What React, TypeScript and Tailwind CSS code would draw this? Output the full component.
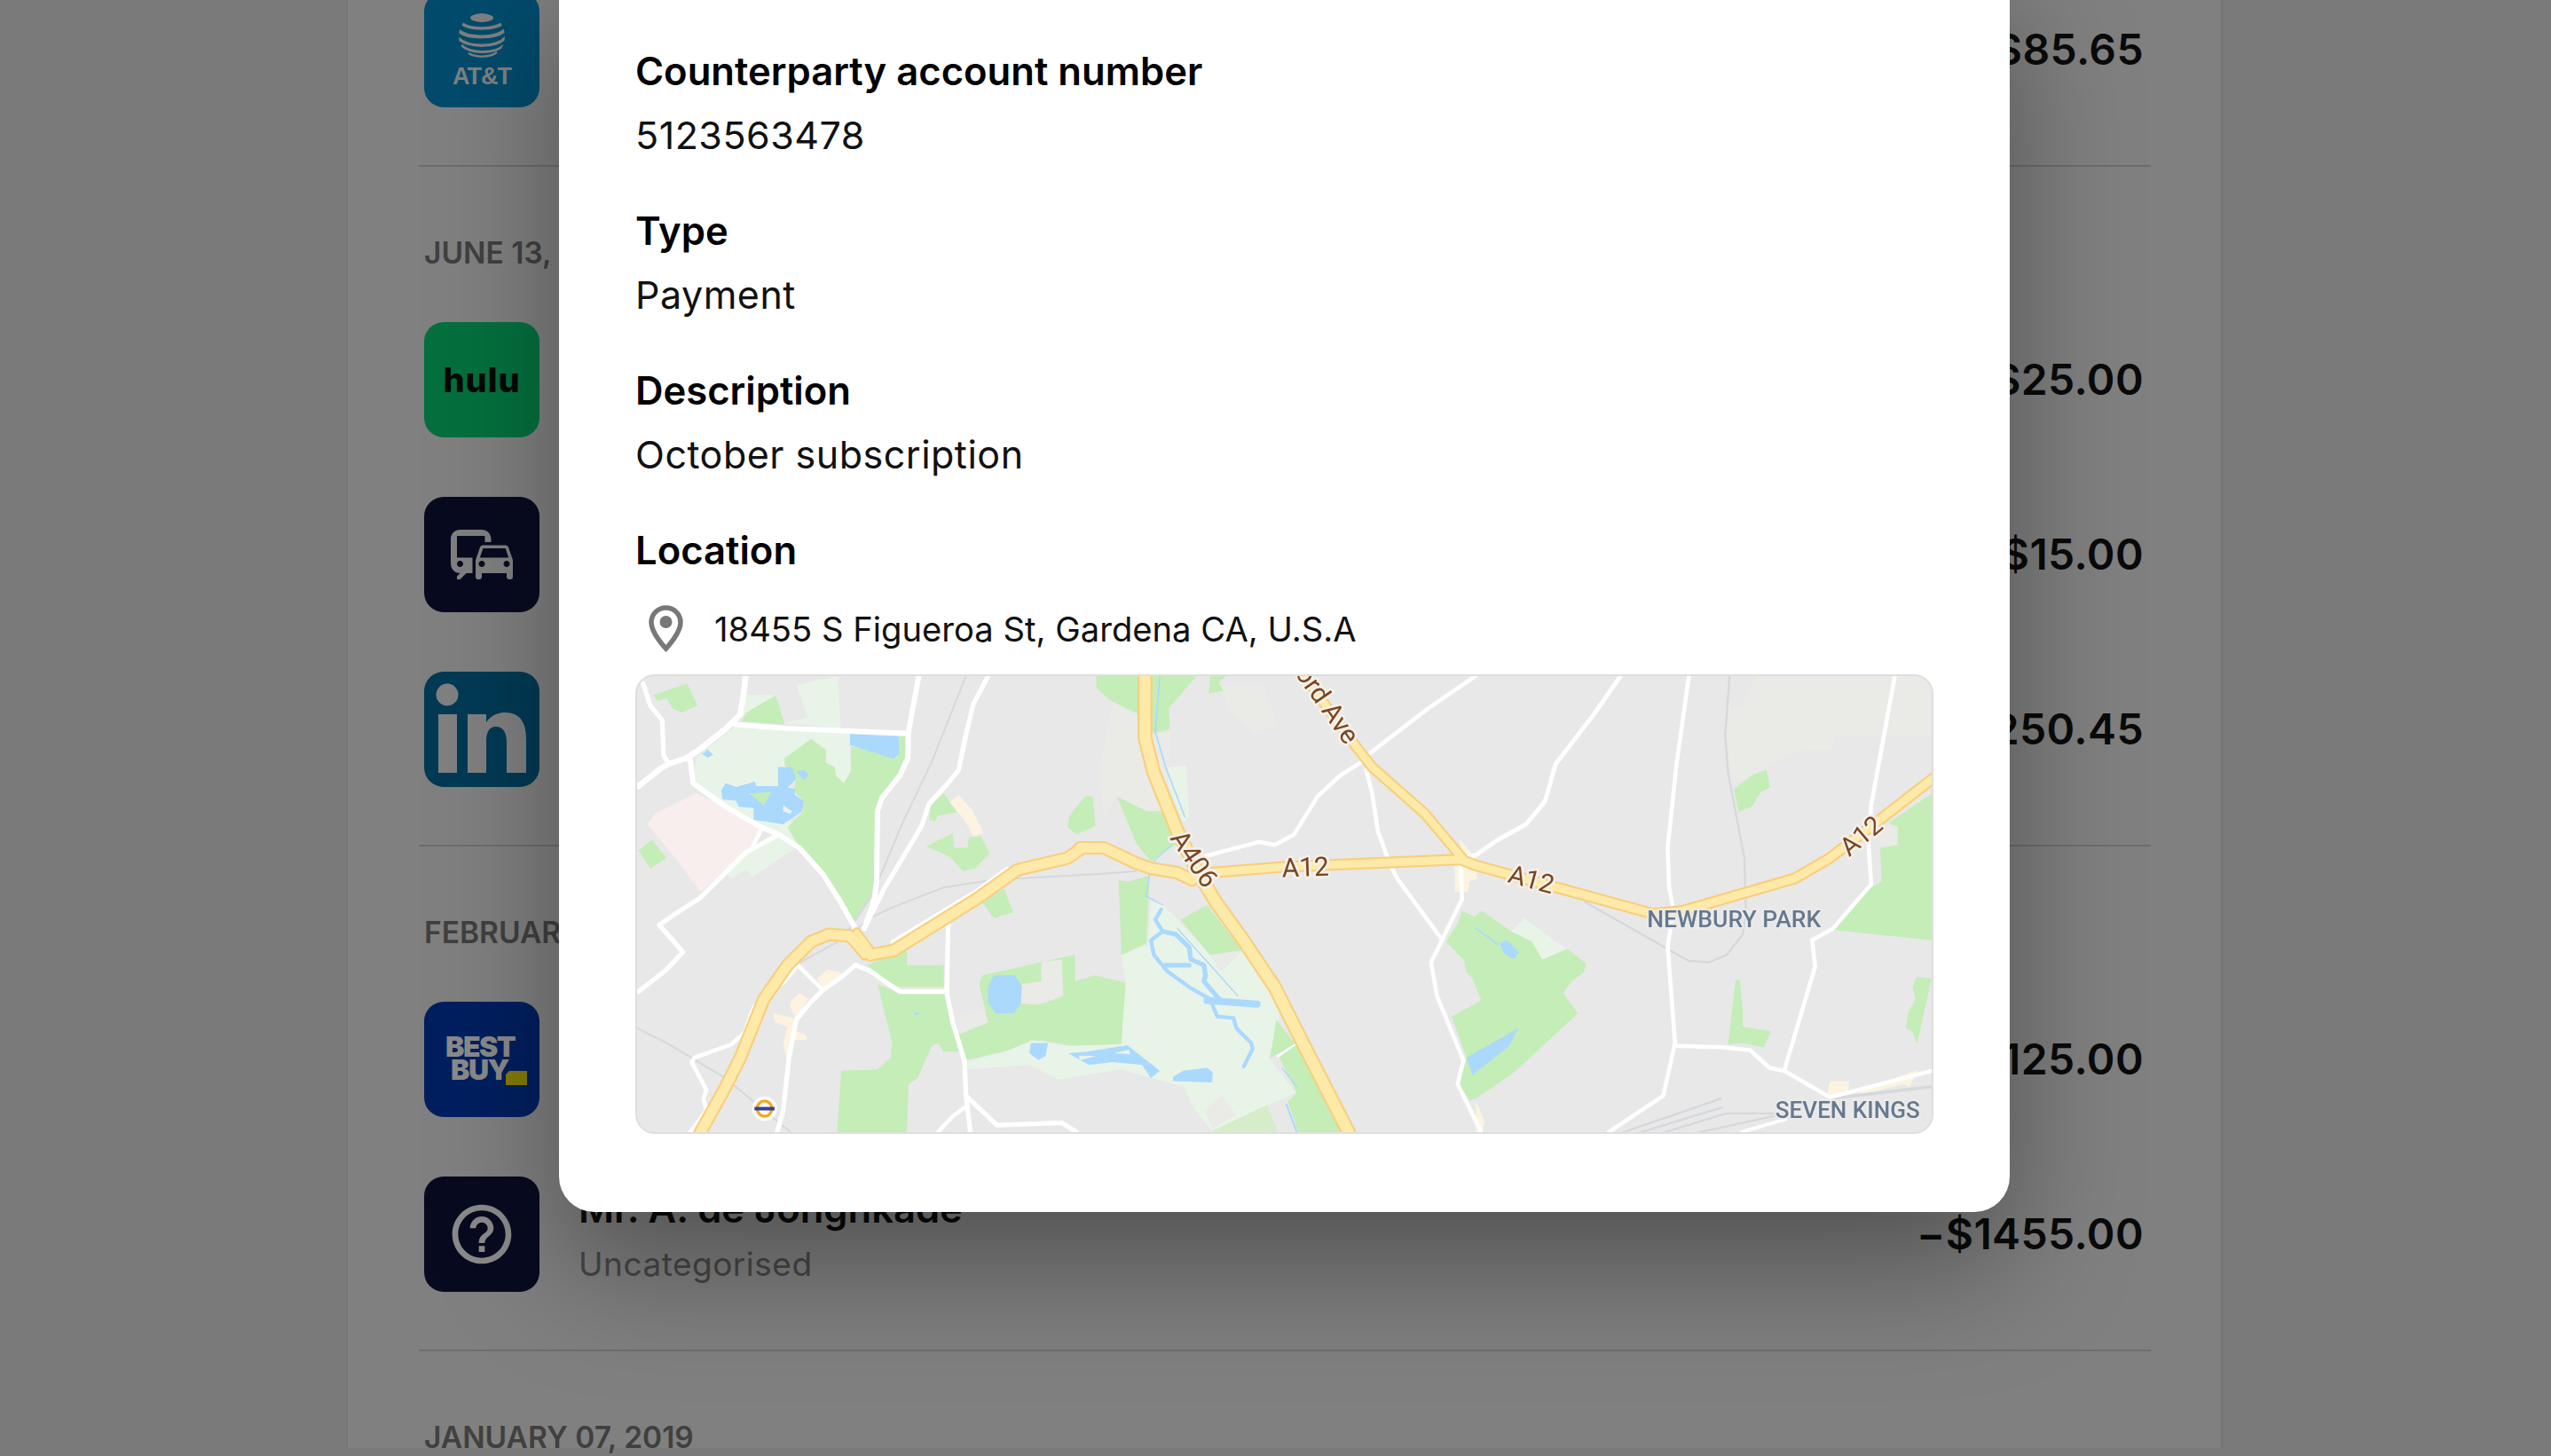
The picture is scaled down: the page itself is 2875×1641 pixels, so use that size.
import React from "react";
import { MdCommute, MdHelpOutline } from "react-icons/md";

const OFF = [0, 1452, 2844];
const pts = (zone: number, s: string) =>
  s.trim().split(/\s+/).map((p) => {
    const [x, y] = p.split(",").map(Number);
    return `${x + OFF[zone]},${y}`;
  });
const line = (...segs: [number, string][]) => "M" + segs.flatMap(([z, s]) => pts(z, s)).join("L");
const area = (...segs: [number, string][]) => line(...segs) + "Z";

const GREEN = "#c4edb8";
const LIGHT = "#e9f4e8";
const BLUE = "#aad9fd";
const BEIGE = "#eaeae7";
const CREAM = "#fcf4e0";
const PINK = "#f9eeee";

const areas: [string, string][] = [
  [BEIGE, area([1, "160,90 230,125 300,195 360,190 350,310 330,470 280,460 175,410 130,470 115,320"])],
  [BEIGE, area([1, "530,30 670,30 720,170 640,195 550,110"])],
  [BEIGE, area([2, "950,0 1545,0 1545,200 1220,200 1210,250 1110,250 870,370 850,250 850,100 900,100"])],
  [LIGHT, area([0, "200,280 335,170 720,195 725,330 700,365 670,335 640,295 640,250 590,215 500,280 500,330 520,500 545,545 530,590 390,685 370,660 320,690 300,670 370,600 480,540 300,445 190,365"])],
  [LIGHT, area([0, "540,30 680,0 690,180 500,160 580,140"])],
  [LIGHT, area([0, "370,65 470,65 400,120 360,130"])],
  [PINK, area([0, "35,505 60,470 200,400 300,445 420,515 385,590 215,735 130,620"])],
  [GREEN, area([0, "55,65 170,25 205,100 150,125 120,110 100,75 70,85"])],
  [GREEN, area([0, "355,155 370,125 470,65 500,165"])],
  [GREEN, area([0, "500,280 590,215 640,250 640,295 670,310 675,340 700,365 725,325 725,240 800,255 880,280 890,205 910,205 915,285 835,410 815,450 810,690 790,760 730,850 680,750 630,670 550,585 510,515 565,460 560,420 530,390 540,350 500,300"])],
  [GREEN, area([0, "5,595 50,557 100,620 45,655"])],
  [GREEN, area([0, "990,490 995,440 1040,400 1085,465 1020,475 1010,495"])],
  [CREAM, area([0, "1060,430 1090,405 1135,455 1175,535 1140,545 1110,490"])],
  [GREEN, area([0, "980,580 1070,535 1075,585 1120,585 1125,550 1165,545 1195,605 1145,655 1105,665 1060,615"])],
  [GREEN, area([0, "1170,770 1245,725 1275,805 1210,825"])],
  [GREEN, area([0, "1460,515 1465,475 1520,410 1545,410 1554,510 1490,540"])],
  [GREEN, area([0, "815,1050 890,1080 1045,1080 1070,1180 1090,1280 1040,1280 1020,1250 1000,1260 950,1370 920,1390 915,1554 678,1554 692,1345 815,1340 860,1300 865,1250"])],
  [GREEN, area([0, "915,935 915,985 1040,985 1040,1060 890,1060 840,1035 780,985 870,950"])],
  [GREEN, area([0, "1090,1220 1190,1180 1160,1050 1170,1020 1370,975 1435,960 1485,950 1485,1040"], [1, "100,1020 205,1045 190,1255 100,1275"], [0, "1370,1240 1260,1275 1110,1310"])],
  [LIGHT, area([1, "190,950 280,915 290,770 330,780 380,830 490,950 520,1000 600,940 640,985 710,1060 725,1170 690,1300 780,1420 690,1460 500,1554 440,1480 400,1400 190,1340 0,1370"], [0, "1430,1375 1330,1325 1120,1340 1120,1315 1260,1275 1340,1240 1452,1260"], [1, "190,1255 205,1045"])],
  [BEIGE, area([0, "1300,1050 1370,1040 1370,975 1440,965 1445,1090 1405,1105 1360,1120 1300,1115"])],
  [BEIGE, area([0, "1090,1160 1170,1130 1190,1180 1095,1220"])],
  [BLUE, area([0, "1210,1020 1280,1020 1305,1055 1300,1120 1275,1150 1215,1150 1190,1110 1190,1060"])],
  [BLUE, area([0, "938,1145 960,1148 945,1158"])],
  [BLUE, area([0, "1335,1250 1393,1250 1385,1295 1360,1308 1330,1285"])],
  [BLUE, area([0, "722,197 888,205 888,265 870,282 722,235"])],
  [BLUE, area([0, "285,390 300,365 335,378 400,360 405,375 478,375 478,310 525,310 540,350 510,380 535,385 535,405 565,425 560,460 495,505 395,490 395,450 345,445 335,425 290,420"])],
  [GREEN, area([0, "380,400 455,395 430,440"])],
  [LIGHT, area([0, "495,440 525,460 520,470 495,460"])],
  [BLUE, area([0, "540,325 565,320 582,335 565,355"])],
  [BLUE, area([0, "220,265 240,250 258,268 240,278"])],
  [CREAM, area([0, "610,1030 645,1000 690,1010 700,1030 640,1070 620,1050"])],
  [CREAM, area([0, "520,1110 550,1080 580,1100 540,1170 520,1130"])],
  [CREAM, area([0, "460,1150 530,1165 540,1210 575,1225 575,1240 530,1240 510,1320 495,1250 510,1195 470,1180"])],
  [GREEN, area([1, "105,0 445,0 350,110 355,180 300,195 240,125 155,85 105,40"])],
  [GREEN, area([1, "490,0 545,0 520,20 535,50 485,60 490,25"])],
  [LIGHT, area([1, "350,310 410,305 420,480 400,500 350,370"])],
  [GREEN, area([1, "175,410 275,460 330,460 380,570 290,630 240,570"])],
  [GREEN, area([1, "180,695 215,700 285,680 275,910 190,950"])],
  [GREEN, area([1, "390,830 480,780 600,935 490,950"])],
  [BEIGE, area([1, "490,950 600,935 530,1005"])],
  [BEIGE, area([1, "470,1480 530,1430 580,1495 500,1540"])],
  [BLUE, area([1, "10,1285 75,1280 210,1258 320,1345 290,1370 260,1325 160,1315 80,1325"])],
  [LIGHT, area([1, "45,1293 105,1295 50,1308"])],
  [LIGHT, area([1, "165,1285 215,1273 220,1288"])],
  [BLUE, area([1, "365,1365 400,1345 480,1335 500,1350 497,1385 365,1380"])],
  [GREEN, area([1, "715,1170 780,1255 695,1300"])],
  [GREEN, area([1, "725,1300 780,1255 940,1554 790,1554 755,1450 785,1420"])],
  ["#d5edc9", area([1, "490,1554 685,1460 720,1554"])],
  [GREEN, area([2, "-100,905 -60,840 -47,800 -5,820 20,800 120,870 190,905 225,965 310,930 375,980 365,1010 325,1040 295,1080 345,1150 130,1350 0,1440 -22,1445 -60,1390 -32,1300 -82,1160 18,1105 -12,1030 -32,1010 -40,970"])],
  [LIGHT, area([2, "120,870 165,825 305,930 225,965 190,905"])],
  [BLUE, area([2, "80,910 105,900 145,940 130,965 95,945"])],
  [BLUE, area([2, "-32,1300 143,1200 113,1260 -12,1360"])],
  [GREEN, area([2, "875,385 940,335 985,320 997,380 965,395 935,445 890,462"])],
  [GREEN, area([2, "1370,580 1430,570 1420,510 1400,500 1545,400 1545,900 1210,865 1340,720 1375,700"])],
  [BEIGE, area([2, "1370,510 1430,510 1430,575 1370,585"])],
  [GREEN, area([2, "880,1035 895,1035 905,1145 905,1195 1000,1210 975,1265 905,1250 855,1255"])],
  [GREEN, area([2, "1495,1025 1545,1030 1495,1255 1480,1210 1458,1200 1465,1150 1490,1100 1480,1060"])],
  [CREAM, area([2, "1200,1380 1265,1380 1260,1425 1190,1430"])],
  [CREAM, area([2, "1370,1390 1500,1340 1470,1400 1450,1390 1250,1440"])],
  [CREAM, area([2, "0,1450 30,1520 20,1554 0,1554"])],
  [CREAM, area([1, "1335,555 1395,625 1395,690 1370,700 1365,735 1320,735 1320,650 1350,625"])],
];

const water: [string, number][] = [
  [line([1, "320,0 305,190 340,310 405,480"]), 5],
  [line([1, "360,575 300,630 285,680 275,750 330,780"]), 4],
  [line([1, "325,795 305,830 330,870 290,900 300,950 345,1005 420,1060 490,1100 515,1160 570,1165 580,1200 630,1250 635,1270 605,1330"]), 13],
  [line([1, "330,870 375,880 420,925 425,965 470,985 475,1020 470,1040 525,1105"]), 16],
  [line([1, "340,985 420,985"]), 16],
  [line([1, "480,1105 650,1118"]), 24],
  [line([1, "380,860 585,1090"]), 4],
  [line([1, "735,1335 785,1400"]), 4],
  [line([1, "750,1460 785,1554"]), 6],
  [line([2, "0,860 75,915"]), 5],
];

const rails: [string, number][] = [
  [line([2, "860,0 845,200 855,330 910,620 915,800 905,880 850,950 790,975 720,970 370,770"]), 7],
  [line([0, "1115,0 1000,290 900,500 800,740 780,770 720,860"]), 6],
  [line([0, "420,1130 555,975 690,900 800,820 860,790 1040,720 1200,695 1554,675"], [1, "240,665"]), 6],
  [line([0, "0,1200 100,1250 300,1370 520,1554"]), 6],
  [line([2, "500,1554 830,1440"]), 7],
  [line([2, "560,1554 835,1470"]), 7],
  [line([2, "640,1554 850,1490 1020,1490"]), 7],
  [line([2, "760,1554 1050,1490"]), 7],
  [line([2, "1200,1440 1540,1400"]), 11],
];

const roads: [string, number][] = [
  [line([0, "20,25 45,100 85,150 90,270 105,295"]), 16],
  [line([0, "5,375 80,315 105,300 165,280 205,255 300,180 350,130 360,70 368,0"]), 20],
  [line([0, "335,165 500,178 915,195"]), 18],
  [line([0, "955,0 920,190 918,280 890,340 830,415 815,460 812,700 805,760 770,860"]), 18],
  [line([0, "180,285 190,365 300,445 420,515 480,540 550,585 630,675 690,770 740,860"]), 18],
  [line([0, "480,540 370,600 300,670 215,755 130,810 75,848 155,940 100,1000 5,1075"]), 16],
  [line([0, "420,525 390,585"]), 14],
  [line([0, "1190,0 1140,95 1115,200 1090,320 1050,370 990,435 965,510 900,620 840,720 770,860"]), 16],
  [line([0, "740,985 700,1020 630,1070 590,1110 540,1170 515,1300 495,1480 475,1554"]), 16],
  [line([0, "545,985 630,1070"]), 14],
  [line([0, "545,985 500,1040 430,1095 395,1130 365,1215 320,1255 195,1300 185,1315 235,1410 225,1440 235,1480 180,1554"]), 14],
  [line([0, "740,985 790,1005 890,1075 1050,1075"]), 16],
  [line([0, "1055,830 1050,1080 1070,1180 1110,1310 1115,1430 1130,1554"]), 16],
  [line([0, "1115,1430 1220,1530 1440,1522 1490,1554"]), 16],
  [line([0, "1110,1470 1070,1500 1020,1554"]), 14],
  [line([0, "865,905 1145,735 1255,655"]), 12],
  [line([1, "470,615 655,565 710,575 775,540 855,410 930,340 1000,295"]), 14],
  [line([1, "1030,265 1230,110 1390,0"]), 14],
  [line([1, "1020,320 1040,400 1060,530 1100,640 1125,690 1275,895"]), 14],
  [line([1, "1340,650 1345,760 1240,975 1260,1090 1350,1310 1330,1390 1410,1554"]), 14],
  [line([1, "1360,615"], [2, "0,610 70,560 170,505 235,425 270,300 400,130 490,0"]), 15],
  [line([1, "720,1295 780,1255"]), 7],
  [line([2, "722,0 680,300 650,585 655,720 670,800 650,920 675,1250 635,1430 450,1554"]), 14],
  [line([2, "675,1260 840,1265 930,1275 995,1335 1045,1345 1200,1435 1545,1345"]), 14],
  [line([2, "1420,0 1340,440 1330,560 1340,710 1210,860 1140,900 1150,990 1045,1345"]), 14],
  [line([2, "900,1554 1050,1510"]), 12],
];

const highways: [string, number][] = [
  [line([1, "810,0 970,220 1040,310 1220,470 1345,620"]), 38],
  [line([0, "215,1554 300,1400 350,1300 430,1100 510,985 590,905 650,880 720,885 760,925 790,950 870,935 1150,760 1290,660 1460,620 1510,585"], [1, "50,585 130,585 235,635 290,655 380,670 430,695"]), 46],
  [line([0, "745,870 790,930 770,955 725,900 745,870"]), 28],
  [line([1, "270,0 270,210 300,330 380,530 450,670 510,770 600,895 710,1060 810,1260 960,1554"]), 50],
  [line([1, "490,670 740,650 1340,625"], [2, "0,645 600,810 700,800 1080,690 1200,620 1330,520 1554,345"]), 40],
];

const MapLabels = () => {
  const road = {
    fontFamily: "Roboto, sans-serif",
    fill: "#7a4520",
    stroke: "#f4f1ea",
    strokeWidth: 16,
    paintOrder: "stroke",
    strokeLinejoin: "round",
  } as React.SVGProps<SVGTextElement>;
  const place = {
    fontFamily: "Roboto, sans-serif",
    fontWeight: 500,
    fill: "#66788e",
    stroke: "#ebebeb",
    strokeWidth: 12,
    paintOrder: "stroke",
    strokeLinejoin: "round",
  } as React.SVGProps<SVGTextElement>;
  return (
    <>
      <text {...road} fontSize={90} textAnchor="middle" transform={`translate(${1452 + 815},682) rotate(-2)`}>A12</text>
      <text {...road} fontSize={90} textAnchor="middle" transform={`translate(${1452 + 412},640) rotate(56)`}>A406</text>
      <text {...road} fontSize={90} textAnchor="end" transform={`translate(${1452 + 950},238) rotate(55)`}>ord Ave</text>
      <text {...road} fontSize={88} textAnchor="middle" transform={`translate(${2844 + 180},722) rotate(15)`}>A12</text>
      <text {...road} fontSize={88} textAnchor="middle" transform={`translate(${2844 + 1325},567) rotate(-40)`}>A12</text>
      <text {...place} fontSize={80} textLength={590} lengthAdjust="spacingAndGlyphs" x={2844 + 580} y={855}>NEWBURY PARK</text>
      <text {...place} fontSize={80} textLength={490} lengthAdjust="spacingAndGlyphs" x={2844 + 1015} y={1505}>SEVEN KINGS</text>
    </>
  );
};

const MapArt = () => (
  <svg viewBox="0 0 4389 1554" preserveAspectRatio="none" className="block h-full w-full blur-[0.5px]">
    {areas.map(([c, d], i) => <path key={i} d={d} fill={c} />)}
    <g fill="none" strokeLinejoin="round" strokeLinecap="round">
      {water.map(([d, w], i) => <path key={i} d={d} stroke={BLUE} strokeWidth={w} />)}
      {rails.map(([d, w], i) => <path key={i} d={d} stroke="#d5d8dc" strokeWidth={w} />)}
      {roads.map(([d, w], i) => <path key={i} d={d} stroke="#ffffff" strokeWidth={w} />)}
      {highways.map(([d, w], i) => <path key={i} d={d} stroke="#f8cf7c" strokeWidth={w} />)}
      {highways.map(([d, w], i) => <path key={i} d={d} stroke="#feeaa8" strokeWidth={w - 13} />)}
    </g>
    <circle cx={432} cy={1474} r={42} fill="#ffffff" />
    <ellipse cx={432} cy={1474} rx={25} ry={26} fill="none" stroke="#f1a81f" strokeWidth={10} />
    <rect x={398} y={1468} width={68} height={12} fill="#3a3f95" />
    <MapLabels />
  </svg>
);

const AttLogo = () => (
  <svg viewBox="0 0 130 130" className="h-full w-full">
    <defs>
      <clipPath id="globe"><circle cx="65" cy="50" r="26" /></clipPath>
    </defs>
    <g clipPath="url(#globe)" fill="none" stroke="#808080">
      <ellipse cx="65" cy="29" rx="13" ry="5" fill="#808080" stroke="none" />
      <path d="M42 35 C50 43 80 43 90 34" strokeWidth="3.5" />
      <path d="M38 43 C48 53 82 53 92 42" strokeWidth="4" />
      <path d="M38 52 C50 63 82 63 92 51" strokeWidth="3.5" />
      <path d="M42 60 C52 70 80 70 90 60" strokeWidth="3" />
      <path d="M50 69 C58 74 74 74 82 68" strokeWidth="2.5" />
    </g>
    <text x="65" y="104" textAnchor="middle" fontFamily="'Liberation Sans', sans-serif" fontWeight="700" fontSize="27" letterSpacing="-1" fill="#808080">AT&amp;T</text>
  </svg>
);

const LinkedInLogo = () => (
  <svg viewBox="0 0 130 130" className="h-full w-full" fill="#808080">
    <circle cx="26" cy="26" r="12.5" />
    <rect x="16" y="48" width="21" height="66" />
    <path d="M49 48H70V57C74 51 81 46 91 46C108 46 115 57 115 76V114H93V80C93 70 90 62 81 62C72 62 70 70 70 80V114H49Z" />
  </svg>
);

const BestBuyLogo = () => (
  <div className="relative h-full w-full pl-[24px] pt-[38px] text-[32px] leading-[26px] font-black tracking-[-1.5px] text-[#8a8a8a]">
    <div>BEST</div>
    <div className="pl-[6px]">BUY</div>
    <svg viewBox="0 0 24 16" className="absolute left-[92px] top-[78px] h-[16px] w-[24px]">
      <path d="M4 0H24V16H0V4Z" fill="#857a08" />
    </svg>
  </div>
);

const Tile = ({ bg, children }: { bg: string; children?: React.ReactNode }) => (
  <div className={`flex h-[130px] w-[130px] shrink-0 items-center justify-center overflow-hidden rounded-[22px] ${bg}`}>
    {children}
  </div>
);

const Row = ({ tile, amount, name, sub }: { tile: React.ReactNode; amount: string; name?: string; sub?: string }) => (
  <div className="flex h-[130px] items-center pl-[6px] pr-[8px]">
    {tile}
    <div className="ml-[44px] flex min-w-0 flex-1 flex-col gap-[16px] pt-[4px]">
      {name && <div className="text-[43.5px] leading-[48px] font-semibold text-[#0a0a0a]">{name}</div>}
      {sub && <div className="text-[37px] leading-[46px] tracking-[0.5px] text-[#474747]">{sub}</div>}
    </div>
    <div className="text-[48px] leading-[56px] font-semibold tracking-[0.4px] text-[#0a0a0a]">{amount}</div>
  </div>
);

const Section = ({ date, children }: { date?: string; children: React.ReactNode }) => (
  <section className={`border-b-2 border-[#6d6d6d] pb-[65px] ${date ? "pt-[77px]" : ""}`}>
    {date && (
      <div className="mb-[58px] pl-[6px] text-[33.5px] leading-[40px] font-semibold text-[#404040]">{date}</div>
    )}
    <div className="flex flex-col gap-[67px]">{children}</div>
  </section>
);

const Field = ({ label, value }: { label: string; value: string }) => (
  <div className="mb-[53px]">
    <div className="text-[43.6px] leading-[56px] font-semibold text-black">{label}</div>
    <div className="mt-[15px] text-[43px] leading-[56px] tracking-[0.5px] text-[#111111]">{value}</div>
  </div>
);

export default function App() {
  return (
    <div className="relative h-[1641px] w-full overflow-hidden bg-[#7a7a7a] font-['Inter',sans-serif]">
      <main className="ml-[390px] h-full w-[2115px] border-x-2 border-[#757575] bg-[#808080] pl-[80px] pr-[79px]">
        <div className="-mt-[9px]">
          <Section>
            <Row tile={<Tile bg="bg-[#024b6c]"><AttLogo /></Tile>} amount="−$85.65" />
          </Section>
          <Section date="JUNE 13, 2019">
            <Row
              tile={<Tile bg="bg-[#04703e]"><span className="text-[38px] font-extrabold tracking-[1px] text-[#050805]">hulu</span></Tile>}
              amount="−$25.00"
            />
            <Row tile={<Tile bg="bg-[#080b20]"><MdCommute size={84} color="#808080" /></Tile>} amount="−$15.00" />
            <Row tile={<Tile bg="bg-[#023a55]"><LinkedInLogo /></Tile>} amount="−$250.45" />
          </Section>
          <Section date="FEBRUARY 10, 2019">
            <Row tile={<Tile bg="bg-[#001f5f]"><BestBuyLogo /></Tile>} amount="−$125.00" />
            <Row
              tile={<Tile bg="bg-[#080b20]"><MdHelpOutline size={80} color="#8a8a8a" /></Tile>}
              name="Mr. A. de Jonghkade"
              sub="Uncategorised"
              amount="−$1455.00"
            />
          </Section>
          <div className="pl-[6px] pt-[77px] text-[33.5px] leading-[40px] font-semibold text-[#404040]">JANUARY 07, 2019</div>
        </div>
      </main>

      <div className="absolute -top-[40px] left-[630px] h-[1406px] w-[1635px] rounded-[40px] bg-white px-[86px] pt-[93px] shadow-[0_60px_140px_rgba(0,0,0,0.36)]">
        <Field label="Counterparty account number" value="5123563478" />
        <Field label="Type" value="Payment" />
        <Field label="Description" value="October subscription" />
        <div className="text-[43.6px] leading-[56px] font-semibold text-black">Location</div>
        <div className="mt-[32px] flex h-[56px] items-center gap-[35px] pl-[15px]">
          <svg viewBox="0 0 39 54" className="h-[54px] w-[39px] shrink-0">
            <path d="M19.5 3C10 3 3 10.5 3 19.5C3 32 19.5 49 19.5 49C19.5 49 36 32 36 19.5C36 10.5 29 3 19.5 3Z" fill="none" stroke="#787878" strokeWidth="5.5" />
            <circle cx="19.5" cy="19" r="7" fill="#787878" />
          </svg>
          <span className="text-[38.2px] leading-[56px] text-[#111111]">18455 S Figueroa St, Gardena CA, U.S.A</span>
        </div>
        <div className="mt-[23px] h-[518px] w-[1463px] overflow-hidden rounded-[22px] border-2 border-[#dedede] bg-[#e8e8e8]">
          <MapArt />
        </div>
      </div>
    </div>
  );
}
